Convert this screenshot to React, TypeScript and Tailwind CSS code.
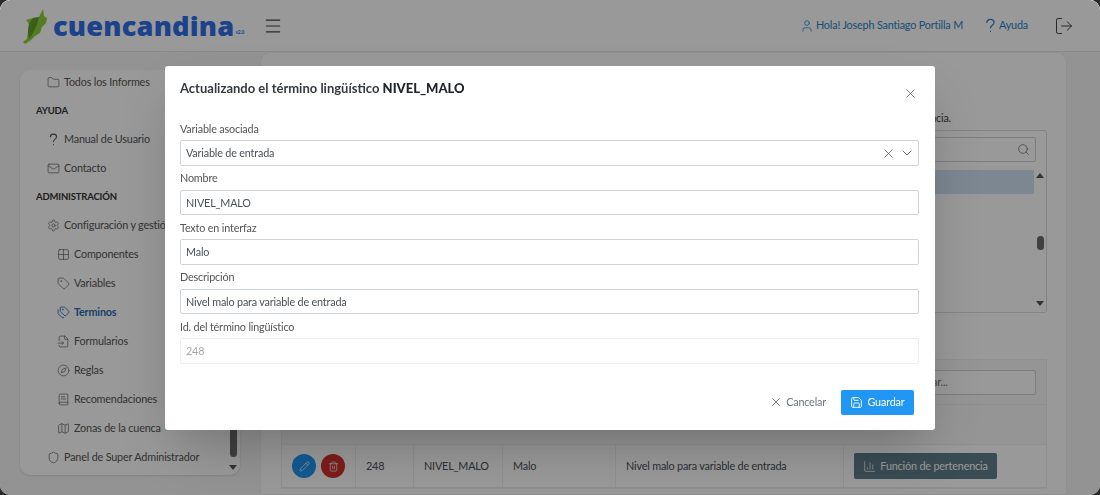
import { User, LogOut, Menu, Folder, Mail, Settings, Grid2x2, Tag, Tags, Compass, BookText, Map, Shield, Pencil, Trash2, ChartColumn, Save, X, ChevronDown, Search, FileInput } from "lucide-react";

const Q = ({ size = 14 }: { size?: number }) => (
  <svg width={size} height={size} viewBox="0 0 14 14" fill="none" stroke="currentColor" strokeWidth="1.1" strokeLinecap="round">
    <path d="M3.6 4.2C3.7 2.3 5.2 1.2 7 1.2c1.9 0 3.3 1.2 3.3 2.9 0 2.6-3.3 2.6-3.3 5.2" />
    <path d="M7 12.3v.3" />
  </svg>
);

const Item = ({ icon, label, sub, active }: { icon: React.ReactNode; label: string; sub?: boolean; active?: boolean }) => (
  <div className={`h-[29px] flex items-center whitespace-nowrap gap-[4px] ${sub ? "pl-[37px]" : "pl-[27px]"} ${active ? "text-[#2a6db5] font-bold" : "text-[#555]"}`}>
    <span className="w-[13px] flex justify-center shrink-0">{icon}</span>
    <span>{label}</span>
  </div>
);

const Field = ({ label, value, disabled }: { label: string; value: string; disabled?: boolean }) => (
  <div className="flex flex-col">
    <label className="h-[24px] flex items-end pb-[3px] text-[#555]">{label}</label>
    <div className={`h-[25.5px] border rounded-[2px] flex items-center pt-[1px] px-[5px] ${disabled ? "border-[#eceff1] text-[#a8a8a8]" : "border-[#ced4da] text-[#495057]"}`}>{value}</div>
  </div>
);

export default function App() {
  return (
    <div className="w-[1100px] h-[495px] bg-[#2a2a2a] overflow-hidden" style={{ fontFamily: 'Lato, "Open Sans", sans-serif' }}>
      <div className="relative w-full h-full rounded-[10px] overflow-hidden bg-[#f6f6f6] text-[10.8px] tracking-[-0.17px] flex flex-col">
        <header className="h-[52px] shrink-0 flex items-center bg-[#ffffff] border-b border-[#e5e5e5]">
          <div className="w-[23px]" />
          <svg width="25" height="35" viewBox="0 0 25 35" className="mt-[2px]">
            <path d="M20 0 L21 7 L24 9 L23 14 L19 18 L17 24 L12 27 L8 31 L2 35 L0 33 L4 30 L5 22 L6 15 L3 11 L10 9 L16 8 Z" fill="#8ccf3a" />
            <path d="M10 9 L16 8 L14 16 L10 24 L6 30 L5 22 L6 15 Z" fill="#5f9e2a" />
          </svg>
          <div className="ml-[5px] text-[27.2px] leading-none font-extrabold text-[#2f6ee9] tracking-[0.2px]" style={{ fontFamily: '"Open Sans", sans-serif' }}>cuencandina</div>
          <div className="self-end mb-[15px] text-[5px] font-bold text-[#2f6ee9] ml-[1px]">v2.0</div>
          <Menu size={20} strokeWidth={1.4} className="ml-[19px] text-[#444]" />
          <div className="ml-auto flex items-center text-[#2a7fc4]">
            <User size={14} strokeWidth={1.3} />
            <span className="ml-[2px]">Hola! Joseph Santiago Portilla M</span>
            <span className="ml-[20px]"><Q size={15} /></span>
            <span className="ml-[1px]">Ayuda</span>
          </div>
          <LogOut size={20} strokeWidth={1.2} className="ml-[26px] mr-[26px] text-[#444] scale-x-[-1] rotate-180" />
        </header>

        <div className="flex-1 flex min-h-0">
          <aside className="w-[220px] ml-[20px] mt-[18px] mb-[20px] bg-white rounded-[10px] shadow-sm relative overflow-hidden">
            <div className="-mt-[2px] flex flex-col">
              <Item icon={<Folder size={13} strokeWidth={1.2} />} label="Todos los Informes" />
              <div className="h-[28px] flex items-center pl-[16px] font-bold text-[9.5px] text-[#333]">AYUDA</div>
              <Item icon={<Q size={13} />} label="Manual de Usuario" />
              <Item icon={<Mail size={13} strokeWidth={1.2} />} label="Contacto" />
              <div className="h-[28px] flex items-center pl-[16px] font-bold text-[9.5px] text-[#333]">ADMINISTRACIÓN</div>
              <Item icon={<Settings size={13} strokeWidth={1.2} />} label="Configuración y gestión" />
              <Item sub icon={<Grid2x2 size={13} strokeWidth={1.2} />} label="Componentes" />
              <Item sub icon={<Tag size={13} strokeWidth={1.2} />} label="Variables" />
              <Item sub active icon={<Tags size={13} strokeWidth={1.6} />} label="Terminos" />
              <Item sub icon={<FileInput size={13} strokeWidth={1.2} />} label="Formularios" />
              <Item sub icon={<Compass size={13} strokeWidth={1.2} />} label="Reglas" />
              <Item sub icon={<BookText size={13} strokeWidth={1.2} />} label="Recomendaciones" />
              <Item sub icon={<Map size={13} strokeWidth={1.2} />} label="Zonas de la cuenca" />
              <Item icon={<Shield size={13} strokeWidth={1.2} />} label="Panel de Super Administrador" />
            </div>
            <div className="absolute right-[3px] top-[320px] w-[7px] h-[67px] rounded-[4px] bg-[#6b6b6b]" />
            <div className="absolute right-[3px] bottom-[5px] w-0 h-0 border-x-[4px] border-x-transparent border-t-[5px] border-t-[#555]" />
          </aside>

          <main className="w-[807px] ml-[20px] bg-white rounded-t-[10px] border border-[#eee] relative overflow-hidden pl-[20px] pr-[19px]">
            <div className="h-[73px] flex items-end justify-end pr-[96px] text-[#444]">Seleccione la variable de su preferencia.</div>
            <div className="mt-[4px] h-[183px] border border-[#ddd] rounded-[3px] relative overflow-hidden">
              <div className="absolute right-[10px] top-[6px] w-[400px] h-[25px] border border-[#ced4da] rounded-[2px] flex items-center justify-end pr-[5px] text-[#666]"><Search size={13} strokeWidth={1.3} /></div>
              <div className="absolute right-[12px] top-[39px] w-[400px] h-[24px] bg-[#cfe2f3]" />
              <div className="absolute right-[2px] top-[42px] w-0 h-0 border-x-[4px] border-x-transparent border-b-[5px] border-b-[#555]" />
              <div className="absolute right-[2px] top-[105px] w-[7px] h-[14px] rounded-[4px] bg-[#6b6b6b]" />
              <div className="absolute right-[2px] bottom-[6px] w-0 h-0 border-x-[4px] border-x-transparent border-t-[5px] border-t-[#555]" />
            </div>
            <div className="mt-[46px] border border-[#eee] text-[#495057]">
              <div className="h-[45px] bg-[#f8f9fa] border-b border-[#eee] flex items-center justify-end pr-[10px]">
                <div className="w-[132px] h-[25px] border border-[#ced4da] bg-white rounded-[2px] flex items-center px-[5px] text-[#777]">Buscar...</div>
              </div>
              <div className="h-[40px] bg-[#f8f9fa] border-b border-[#eee]" />
              <div className="h-[43px] flex items-center border-b border-[#eee]">
                <div className="w-[74px] h-full flex items-center justify-center gap-[5px] border-r border-[#eee]">
                  <span className="w-[24px] h-[24px] rounded-full bg-[#2196f3] text-white flex items-center justify-center"><Pencil size={11} strokeWidth={1.5} /></span>
                  <span className="w-[24px] h-[24px] rounded-full bg-[#d32f2f] text-white flex items-center justify-center"><Trash2 size={11} strokeWidth={1.5} /></span>
                </div>
                <div className="w-[58px] h-full flex items-center pl-[10px] border-r border-[#eee]">248</div>
                <div className="w-[89px] h-full flex items-center pl-[10px] border-r border-[#eee]">NIVEL_MALO</div>
                <div className="w-[113px] h-full flex items-center pl-[10px] border-r border-[#eee]">Malo</div>
                <div className="w-[228px] h-full flex items-center pl-[10px] border-r border-[#eee]">Nivel malo para variable de entrada</div>
                <div className="pl-[10px]">
                  <div className="w-[143px] h-[26px] bg-[#607d8b] rounded-[2px] text-white flex items-center justify-center gap-[4px]">
                    <ChartColumn size={13} strokeWidth={1.3} />
                    <span>Función de pertenencia</span>
                  </div>
                </div>
              </div>
            </div>
          </main>
        </div>

        <div className="absolute inset-0 bg-black/40 backdrop-blur-[0.5px]" />

        <div className="absolute left-[165px] top-[66px] w-[770px] h-[364px] bg-white rounded-[3px] shadow-2xl flex flex-col px-[15px] text-[#495057]">
          <div className="h-[45px] flex items-start justify-between pt-[13px]">
            <h2 className="text-[13px] leading-[18px] font-bold tracking-[0px] text-[#343a40]">Actualizando el término lingüístico <span className="font-black text-[#212529]">NIVEL_MALO</span></h2>
            <X size={15} strokeWidth={1.2} className="mt-[7px] mr-[2px] text-[#555]" />
          </div>
          <div className="flex flex-col mr-[1px] mt-[5px]">
            <div className="flex flex-col">
              <label className="h-[24px] flex items-end pb-[3px] text-[#555]">Variable asociada</label>
              <div className="h-[25.5px] border border-[#ced4da] rounded-[2px] flex items-center pt-[1px] pl-[5px] pr-[3px]">
                <span>Variable de entrada</span>
                <X size={15} strokeWidth={1.2} className="ml-auto text-[#555]" />
                <ChevronDown size={16} strokeWidth={1.3} className="ml-[3px] text-[#555]" />
              </div>
            </div>
            <Field label="Nombre" value="NIVEL_MALO" />
            <Field label="Texto en interfaz" value="Malo" />
            <Field label="Descripción" value="Nivel malo para variable de entrada" />
            <Field label="Id. del término lingüístico" value="248" disabled />
          </div>
          <div className="mt-[26px] flex items-center justify-end mr-[6px]">
            <X size={14} strokeWidth={1.2} className="text-[#555]" />
            <span className="ml-[3px] text-[#6c757d]">Cancelar</span>
            <button className="ml-[15px] w-[73px] h-[25.5px] bg-[#2196f3] text-white rounded-[2px] flex items-center justify-center gap-[4px]">
              <Save size={13} strokeWidth={1.6} />
              <span>Guardar</span>
            </button>
          </div>
        </div>
      </div>
    </div>
  );
}
